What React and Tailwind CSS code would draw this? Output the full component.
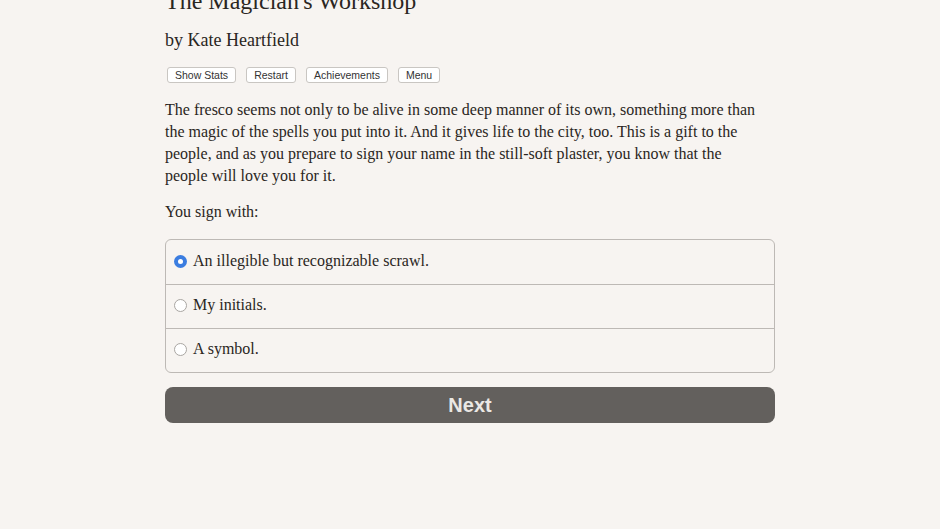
import React from 'react';

const choices = [
  'An illegible but recognizable scrawl.',
  'My initials.',
  'A symbol.',
];

const App = () => {
  return (
    <div className="w-full min-h-[529px] bg-[#f7f4f1] text-[#2a2622] overflow-hidden" style={{ fontFamily: '"Liberation Serif", "DejaVu Serif", serif' }}>
      <div className="w-[610px] mx-auto">
        {/* Header */}
        <h1 className="text-[24px] leading-[30px] mt-[-14px]">The Magician's Workshop</h1>
        <h2 className="text-[18px] leading-[24px] mt-[12px]">by Kate Heartfield</h2>

        <div className="flex gap-[10px] mt-[15px] ml-[2px] font-['Liberation_Sans',sans-serif] text-[10.5px] text-[#333]">
          {['Show Stats', 'Restart', 'Achievements', 'Menu'].map((label) => (
            <button key={label} className="h-[16px] px-[7px] bg-white border border-[#c9c6c2] rounded-[3px] leading-none">
              {label}
            </button>
          ))}
        </div>

        {/* Passage */}
        <p className="w-[598px] text-[16px] leading-[22px] mt-[16px]">
          The fresco seems not only to be alive in some deep manner of its own, something more than the magic of the spells you put into it. And it gives life to the city, too. This is a gift to the people, and as you prepare to sign your name in the still-soft plaster, you know that the people will love you for it.
        </p>
        <p className="text-[16px] leading-[22px] mt-[14px]">You sign with:</p>

        {/* Choices */}
        <div className="mt-[16px] border border-[#bdb9b5] rounded-[6px]">
          {choices.map((c, i) => (
            <label key={c} className={`flex items-center gap-[6px] h-[44px] px-[8px] pb-[3px] text-[16px] ${i > 0 ? 'border-t border-[#bdb9b5]' : ''}`}>
              {i === 0 ? (
                <span className="w-[13px] h-[13px] mt-[1px] rounded-full bg-[#3b7de0] flex items-center justify-center">
                  <span className="w-[5px] h-[5px] rounded-full bg-white"></span>
                </span>
              ) : (
                <span className="w-[13px] h-[13px] mt-[1px] rounded-full bg-white border border-[#a9a6a2]"></span>
              )}
              <span>{c}</span>
            </label>
          ))}
        </div>

        <button className="mt-[14px] w-full h-[36px] bg-[#63605d] rounded-[8px] text-[#ebe8e4] text-[20px] font-bold font-['Liberation_Sans',sans-serif]">
          Next
        </button>
      </div>
    </div>
  );
};

export default App;
